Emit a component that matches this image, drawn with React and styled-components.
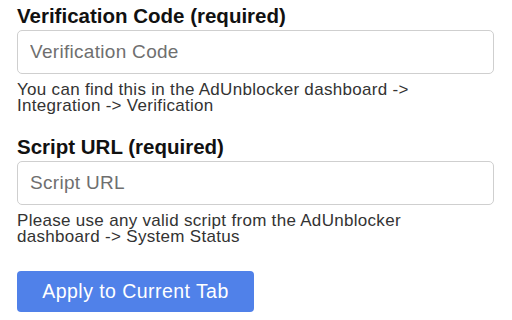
import React from "react";
import styled, { createGlobalStyle } from "styled-components";

const GlobalStyle = createGlobalStyle`
  html, body {
    margin: 0;
    padding: 0;
    background: #ffffff;
  }
  body {
    font-family: "Liberation Sans", Arial, sans-serif;
  }
`;

const Page = styled.div`
  width: 512px;
  height: 320px;
  box-sizing: border-box;
  padding: 3px 18px 0 17px;
  display: flex;
  flex-direction: column;
  gap: 20px;
  overflow: hidden;
`;

const Field = styled.div`
  display: flex;
  flex-direction: column;
`;

const Label = styled.label`
  font-size: 20.5px;
  line-height: 25px;
  font-weight: 700;
  color: #111111;
  margin-bottom: 2px;
`;

const Input = styled.input`
  box-sizing: border-box;
  width: 100%;
  height: 44px;
  padding: 0 12px;
  border: 1px solid #cfcfcf;
  border-radius: 5px;
  background: #ffffff;
  font-family: inherit;
  font-size: 19px;
  letter-spacing: 0.3px;
  color: #222222;
  outline: none;

  &::placeholder {
    color: #6f6f6f;
  }
`;

const Help = styled.p`
  margin: 8px 0 0;
  max-width: 470px;
  font-size: 17px;
  line-height: 16px;
  letter-spacing: 0.3px;
  color: #333333;
`;

const ApplyButton = styled.button`
  align-self: flex-start;
  margin-top: 6px;
  width: 237px;
  height: 41px;
  border: none;
  border-radius: 4px;
  background: #5081e9;
  color: #ffffff;
  font-family: inherit;
  font-size: 19.5px;
  letter-spacing: 0.45px;
  cursor: pointer;
`;

export default function App() {
  return (
    <>
      <GlobalStyle />
      <Page>
        <Field>
          <Label htmlFor="code">Verification Code (required)</Label>
          <Input id="code" type="text" placeholder="Verification Code" />
          <Help>You can find this in the AdUnblocker dashboard -&gt; Integration -&gt; Verification</Help>
        </Field>
        <Field>
          <Label htmlFor="script">Script URL (required)</Label>
          <Input id="script" type="text" placeholder="Script URL" />
          <Help>Please use any valid script from the AdUnblocker dashboard -&gt; System Status</Help>
        </Field>
        <ApplyButton type="button">Apply to Current Tab</ApplyButton>
      </Page>
    </>
  );
}
